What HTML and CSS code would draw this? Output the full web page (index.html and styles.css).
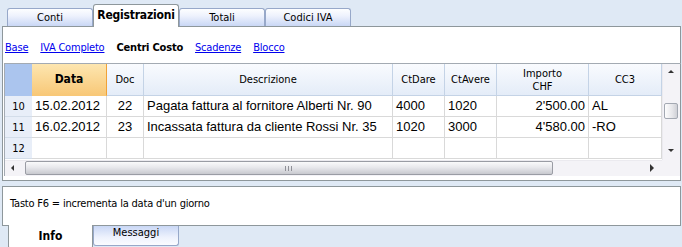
FILE: index.html
```html
<!DOCTYPE html>
<html lang="it">
	<head>
		<meta charset="utf-8" />
		<title>Registrazioni</title>
		<link rel="stylesheet" href="styles.css">
	</head>
	<body>
		<div class="tabs">
			<div class="tab">Conti</div>
			<div class="tab active">Registrazioni</div>
			<div class="tab">Totali</div>
			<div class="tab">Codici IVA</div>
		</div>

		<div class="panel">
			<div class="views">
				<a href="#">Base</a>
				<a href="#">IVA Completo</a>
				<span class="current">Centri Costo</span>
				<a href="#">Scadenze</a>
				<a href="#">Blocco</a>
			</div>

			<div class="grid">
				<div class="body">
					<div class="sheet">
						<div class="hd corner-cell"></div>
						<div class="hd sorted">Data</div>
						<div class="hd">Doc</div>
						<div class="hd">Descrizione</div>
						<div class="hd">CtDare</div>
						<div class="hd">CtAvere</div>
						<div class="hd">Importo<br>CHF</div>
						<div class="hd">CC3</div>

						<div class="num">10</div>
						<div class="cell">15.02.2012</div>
						<div class="cell center">22</div>
						<div class="cell">Pagata fattura al fornitore Alberti Nr. 90</div>
						<div class="cell">4000</div>
						<div class="cell">1020</div>
						<div class="cell right">2'500.00</div>
						<div class="cell">AL</div>

						<div class="num">11</div>
						<div class="cell">16.02.2012</div>
						<div class="cell center">23</div>
						<div class="cell">Incassata fattura da cliente Rossi Nr. 35</div>
						<div class="cell">1020</div>
						<div class="cell">3000</div>
						<div class="cell right">4'580.00</div>
						<div class="cell">-RO</div>

						<div class="num">12</div>
						<div class="cell"></div>
						<div class="cell"></div>
						<div class="cell"></div>
						<div class="cell"></div>
						<div class="cell"></div>
						<div class="cell"></div>
						<div class="cell"></div>
					</div>
					<div class="vscroll">
						<span class="arrow up"></span>
						<span class="vthumb"></span>
						<span class="arrow down"></span>
					</div>
				</div>
				<div class="hbar">
					<div class="hscroll">
						<span class="arrow left"></span>
						<span class="hthumb"><span class="grip"></span></span>
						<span class="arrow right"></span>
					</div>
					<div class="scorner"></div>
				</div>
			</div>
		</div>

		<div class="info">Tasto F6 = incrementa la data d'un giorno</div>

		<div class="btabs">
			<div class="btab active">Info</div>
			<div class="btab">Messaggi</div>
		</div>
	</body>
</html>
```

FILE: styles.css
```css
body {
	margin: 0;
	width: 682px;
	height: 247px;
	overflow: hidden;
	background: #dfe9f5;
	font-family: "DejaVu Sans Condensed", "DejaVu Sans", sans-serif;
	font-size: 11px;
	color: #000;
}

/* top tabs */
.tabs {
	display: flex;
	align-items: flex-end;
	height: 26px;
	padding-left: 7px;
}
.tab {
	box-sizing: border-box;
	width: 86px;
	height: 18px;
	line-height: 17px;
	text-align: center;
	border: 1px solid #97a8c9;
	border-bottom: none;
	border-radius: 3px 3px 0 0;
	background: linear-gradient(#fdfeff, #eef2fd 40%, #c9d7f5);
}
.tab.active {
	position: relative;
	z-index: 1;
	height: 23px;
	margin-bottom: -1px;
	line-height: 20px;
	font-weight: bold;
	font-size: 12px;
	letter-spacing: -0.2px;
	border-color: #8e979b;
	background: #fff;
}

/* main panel */
.panel {
	box-sizing: border-box;
	width: 679px;
	height: 155px;
	margin-left: 2px;
	border: 1px solid #8e979b;
	background: #fff;
}
.views {
	display: flex;
	gap: 12px;
	height: 36px;
	box-sizing: border-box;
	padding: 14px 0 0 2px;
	line-height: 14px;
	font-size: 11px;
	letter-spacing: -0.2px;
}
.views a {
	color: #0000ee;
}
.views .current {
	font-weight: bold;
}

.grid {
	width: 676px;
	margin-left: 1px;
	border-top: 1px solid #a3aab2;
	border-left: 1px solid #a3aab2;
}
.body {
	display: flex;
	height: 96px;
	overflow: hidden;
}
.sheet {
	display: grid;
	grid-template-columns: 27px 75px 37px 249px 52px 52px 92px 73px;
	grid-template-rows: 32px;
	grid-auto-rows: 21px;
	width: 657px;
	font-family: "Liberation Sans", Arial, sans-serif;
	font-size: 13px;
}
.sheet > div {
	box-sizing: border-box;
	border-right: 1px solid #d9d9d9;
	border-bottom: 1px solid #d9d9d9;
	white-space: nowrap;
	overflow: hidden;
}
.hd {
	display: flex;
	align-items: center;
	justify-content: center;
	text-align: center;
	line-height: 13px;
	font-family: "DejaVu Sans Condensed", "DejaVu Sans", sans-serif;
	font-size: 11px;
	background: linear-gradient(#f9fbfe, #e4ecf8);
	border-color: #c4d3e6 !important;
}
.sheet > .corner-cell {
	background: #abc5ee;
	border-right: none;
	border-bottom-color: #abc5ee !important;
}
.sheet > .sorted {
	font-weight: bold;
	font-size: 12px;
	background: linear-gradient(#fde6b0, #f8c878);
	border-right-color: #f0a238 !important;
	border-bottom-color: #f8c878 !important;
}
.sheet > .num {
	display: flex;
	align-items: center;
	justify-content: center;
	font-family: "DejaVu Sans Condensed", "DejaVu Sans", sans-serif;
	font-size: 11px;
	background: #e8eef8;
	border-right: none;
	border-bottom-color: #d3dde9;
}
.cell {
	padding: 0 3px;
	line-height: 20px;
}
.cell.center {
	text-align: center;
}
.cell.right {
	text-align: right;
}

/* scrollbars */
.vscroll {
	position: relative;
	width: 18px;
	background: #f4f3f7;
	border-left: 1px solid #ebeaef;
	box-sizing: border-box;
}
.arrow {
	position: absolute;
	width: 0;
	height: 0;
	border: 3px solid transparent;
}
.arrow.up {
	left: 5px;
	top: 6px;
	border-bottom: 3px solid #333;
	border-top: none;
}
.arrow.down {
	left: 5px;
	bottom: 8px;
	border-top: 3px solid #333;
	border-bottom: none;
}
.vthumb {
	position: absolute;
	left: 1px;
	top: 39px;
	width: 14px;
	height: 16px;
	box-sizing: border-box;
	border: 1px solid #a3a8b2;
	border-radius: 2px;
	background: linear-gradient(90deg, #fdfdfd, #e6e6ea 60%, #cfd0d6);
}
.hbar {
	display: flex;
	height: 16px;
}
.hscroll {
	position: relative;
	width: 657px;
	background: #f4f3f7;
	border-top: 1px solid #ebeaef;
	box-sizing: border-box;
}
.arrow.left {
	left: 6px;
	top: 4px;
	border-right: 3px solid #333;
	border-left: none;
}
.arrow.right {
	right: 8px;
	top: 3px;
	border-left: 4px solid #333;
	border-right: none;
	border-top-width: 4px;
	border-bottom-width: 4px;
}
.hthumb {
	position: absolute;
	left: 20px;
	top: 0;
	width: 528px;
	height: 14px;
	box-sizing: border-box;
	border: 1px solid #9a9ca4;
	border-radius: 2px;
	background: linear-gradient(#fafafb, #e8e8ec 45%, #c8c9cf);
}
.grip {
	position: absolute;
	left: 259px;
	top: 4px;
	width: 7px;
	height: 5px;
	background: repeating-linear-gradient(90deg, #8f9097 0 1px, transparent 1px 3px);
}
.scorner {
	width: 18px;
	background: #f4f3f7;
}

/* info panel */
.info {
	box-sizing: border-box;
	width: 679px;
	height: 40px;
	margin: 5px 0 0 2px;
	padding: 10px 0 0 7px;
	line-height: 14px;
	letter-spacing: -0.2px;
	border: 1px solid #8e979b;
	background: #fff;
}

/* bottom tabs */
.btabs {
	display: flex;
	align-items: flex-start;
	padding-left: 8px;
}
.btab {
	box-sizing: border-box;
	width: 86px;
	height: 20px;
	line-height: 14px;
	text-align: center;
	border: 1px solid #97a8c9;
	border-top: none;
	border-radius: 0 0 3px 3px;
	background: linear-gradient(#c9d7f5, #eef2fd 60%, #fbfcff);
}
.btab.active {
	position: relative;
	width: 85px;
	height: 24px;
	margin-top: -1px;
	line-height: 23px;
	font-weight: bold;
	font-size: 12px;
	border-color: #8e979b;
	background: #fff;
}
```
